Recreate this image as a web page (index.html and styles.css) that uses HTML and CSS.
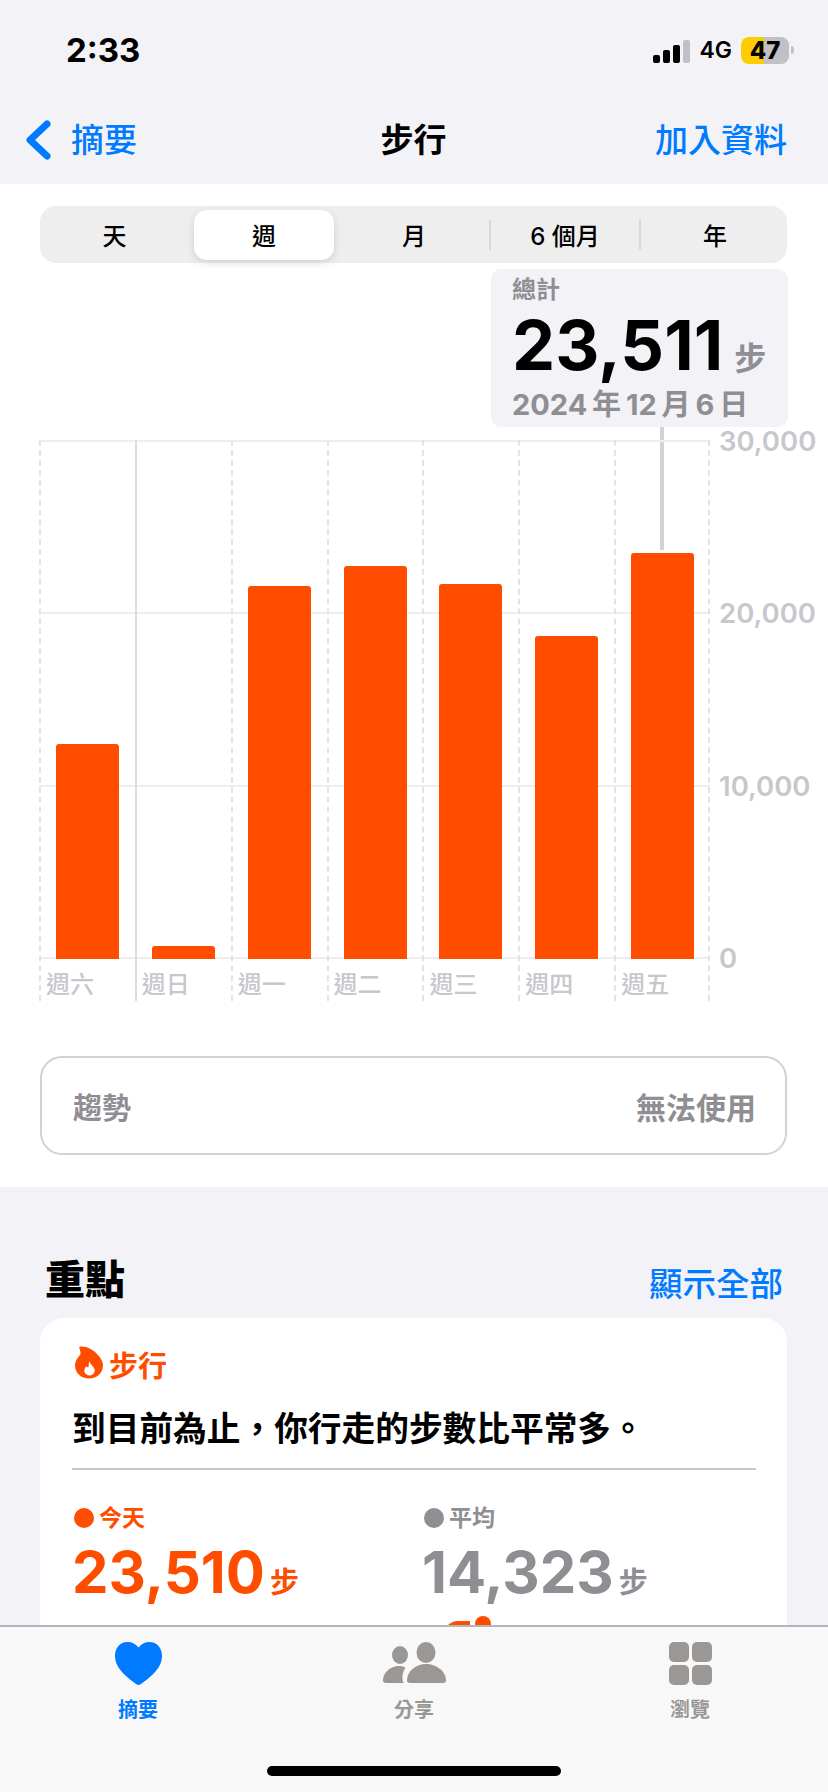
FILE: index.html
```html
<!DOCTYPE html>
<html lang="zh-Hant">
<head>
  <meta charset="UTF-8" />
  <meta name="viewport" content="width=device-width, initial-scale=1.0" />
  <title>步行</title>
  <link rel="stylesheet" href="styles.css">
</head>
<body>
  <div class="phone">
    <div class="status">
      <div class="time">2:33</div>
      <div class="status-right">
        <div class="signal">
          <span class="sig sig1"></span>
          <span class="sig sig2"></span>
          <span class="sig sig3"></span>
          <span class="sig sig4"></span>
        </div>
        <div class="net">4G</div>
        <div class="battery">47</div>
        <div class="nub"></div>
      </div>
    </div>

    <header class="nav">
      <a class="back">
        <svg class="chevron" viewBox="0 0 26 40"><path d="M22 4 L5 20 L22 36" fill="none" stroke="#007aff" stroke-width="7" stroke-linecap="round" stroke-linejoin="round"/></svg>
        <span>摘要</span>
      </a>
      <div class="title">步行</div>
      <a class="add">加入資料</a>
    </header>

    <section class="detail">
      <div class="segment">
        <div class="seg-item">天</div>
        <div class="seg-item selected">週</div>
        <div class="seg-item">月</div>
        <div class="seg-item sep">6 個月</div>
        <div class="seg-item sep">年</div>
      </div>

      <div class="summary">
        <div class="summary-label">總計</div>
        <div class="summary-value">23,511<span class="summary-unit">步</span></div>
        <div class="summary-date">2024 年 12 月 6 日</div>
      </div>

      <div class="chart">
        <div class="grid-lines">
          <div class="grid-line"><span>30,000</span></div>
          <div class="grid-line"><span>20,000</span></div>
          <div class="grid-line"><span>10,000</span></div>
          <div class="grid-line"><span>0</span></div>
        </div>
        <div class="cols">
          <div class="col"><div class="plot"><div class="bar" style="height:215px"></div></div><div class="day">週六</div></div>
          <div class="col solid"><div class="plot"><div class="bar" style="height:13px"></div></div><div class="day">週日</div></div>
          <div class="col"><div class="plot"><div class="bar" style="height:373px"></div></div><div class="day">週一</div></div>
          <div class="col"><div class="plot"><div class="bar" style="height:393px"></div></div><div class="day">週二</div></div>
          <div class="col"><div class="plot"><div class="bar" style="height:375px"></div></div><div class="day">週三</div></div>
          <div class="col"><div class="plot"><div class="bar" style="height:323px"></div></div><div class="day">週四</div></div>
          <div class="col last"><div class="plot"><div class="bar picked" style="height:406px"></div></div><div class="day">週五</div></div>
        </div>
      </div>

      <div class="trend">
        <span>趨勢</span>
        <span class="trend-state">無法使用</span>
      </div>
    </section>

    <section class="highlights">
      <div class="section-head">
        <h2>重點</h2>
        <a>顯示全部</a>
      </div>
      <div class="card">
        <div class="card-tag">
          <svg class="flame" viewBox="0 0 27 31"><path fill-rule="evenodd" fill="#ff4d00" d="M4 .5 C10 -1 17 3 21 7 C25 11 27 14.5 27 18 C27 26 21 31 13.5 31 C6 31 0 26 0 18 C0 14 2.5 11 5 8 C6 6 4.5 3 4 .5 Z M14 14 C14.5 18 19 19 19 23 C19 26 17 28 14 28 C11 28 9 26 9 23.5 C9 21.5 10 20 11 19 C11.5 20 12 20.5 13 20 C13.5 18 13 16 14 14 Z"/></svg>
          <span>步行</span>
        </div>
        <div class="card-text">到目前為止，你行走的步數比平常多。</div>
        <div class="stats">
          <div class="stat today">
            <div class="stat-label"><i></i>今天</div>
            <div class="stat-value">23,510<span>步</span></div>
          </div>
          <div class="stat avg">
            <div class="stat-label"><i></i>平均</div>
            <div class="stat-value">14,323<span>步</span></div>
          </div>
        </div>
        <svg class="peek" viewBox="0 0 44 10"><path d="M0 10 Q5 5 11 5 L23 5 L23 10 Z" fill="#ff4d00"/><circle cx="36" cy="8" r="8" fill="#ff4d00"/></svg>
      </div>
    </section>

    <nav class="tabbar">
      <div class="tab active">
        <svg class="tab-icon heart" viewBox="0 0 47 43"><path d="M23.5 43 C22 43 21 42 19 40.5 C9 33 0 25 0 14 C0 6 5 0 12.5 0 C17 0 21 2 23.5 5.5 C26 2 30 0 34.5 0 C42 0 47 6 47 14 C47 25 38 33 28 40.5 C26 42 25 43 23.5 43 Z" fill="#007aff"/></svg>
        <span>摘要</span>
      </div>
      <div class="tab">
        <svg class="tab-icon people" viewBox="0 0 63 41" fill="#9a9794">
          <ellipse cx="17" cy="13" rx="8" ry="9"/>
          <ellipse cx="43" cy="10.5" rx="9.5" ry="10.5"/>
          <path d="M3 41 C1 41 0 40 0 38.5 C0 31 7 24 16 24 C18.5 24 20.5 24.5 22.5 25.5 C20 29 19 33 19.5 38 C19.5 39 20 40 21 41 Z"/>
          <path d="M27 41 C25 41 24 40 24 38.5 C24 29 33 22 43 22 C53 22 63 29 63 38.5 C63 40 62 41 60 41 Z"/>
        </svg>
        <span>分享</span>
      </div>
      <div class="tab">
        <div class="tab-icon tiles"><i></i><i></i><i></i><i></i></div>
        <span>瀏覽</span>
      </div>
      <div class="home-bar"></div>
    </nav>
  </div>
</body>
</html>
```

FILE: styles.css
```css
* {
  box-sizing: border-box;
}

body {
  margin: 0;
  font-family: Inter, "Noto Sans CJK TC", sans-serif;
  background: #f2f2f7;
  color: #000;
}

.phone {
  position: relative;
  width: 828px;
  height: 1792px;
  overflow: hidden;
  background: #f2f2f7;
}

/* status bar */
.status {
  height: 100px;
  padding: 32px 34px 0 66px;
  display: flex;
  justify-content: space-between;
  align-items: flex-start;
}

.time {
  font-size: 33px;
  line-height: 36px;
  font-weight: 700;
}

.status-right {
  display: flex;
  align-items: center;
  height: 28px;
  margin-top: 4px;
}

.signal {
  display: flex;
  align-items: flex-end;
  gap: 3px;
  height: 24px;
  margin-top: 2px;
}

.sig {
  width: 7px;
  background: #000;
  border-radius: 2px;
}

.sig1 { height: 8px; }
.sig2 { height: 13px; }
.sig3 { height: 18px; }
.sig4 { height: 23px; background: #c0c0c6; }

.net {
  margin-left: 9px;
  font-size: 23px;
  font-weight: 600;
}

.battery {
  margin-left: 9px;
  width: 48px;
  height: 27px;
  border-radius: 8px;
  background: linear-gradient(to right, #ffcc00 23px, #c0c0c6 23px);
  font-size: 24px;
  font-weight: 800;
  line-height: 27px;
  text-align: center;
}

.nub {
  width: 3px;
  height: 8px;
  margin-left: 2px;
  background: #c0c0c6;
  border-radius: 0 3px 3px 0;
}

/* nav */
.nav {
  height: 84px;
  padding: 0 41px 0 25px;
  display: grid;
  grid-template-columns: 1fr auto 1fr;
  font-size: 33px;
  line-height: 80px;
}

.back {
  display: flex;
  align-items: center;
  gap: 20px;
  color: #007aff;
  font-weight: 500;
  height: 80px;
}

.chevron {
  width: 26px;
  height: 40px;
}

.title {
  font-weight: 700;
  font-size: 33px;
  margin-left: 15px;
}

.add {
  color: #007aff;
  font-weight: 500;
  text-align: right;
}

/* white detail section */
.detail {
  background: #fff;
  height: 1003px;
  padding: 22px 41px 0 40px;
}

.segment {
  height: 57px;
  background: #eeeeef;
  border-radius: 16px;
  display: grid;
  grid-template-columns: 149px repeat(4, 150px);
  align-items: center;
}

.seg-item {
  height: 30px;
  display: flex;
  align-items: center;
  justify-content: center;
  font-size: 24px;
  font-weight: 500;
}

.seg-item.selected {
  height: 50px;
  margin: 0 5px;
  background: #fff;
  border-radius: 13px;
  box-shadow: 0 3px 8px rgba(0, 0, 0, 0.12);
}

.seg-item.sep {
  border-left: 2px solid #d8d8da;
}

.summary {
  position: relative;
  margin: 6px 0 0 451px;
  width: 297px;
  height: 158px;
  padding: 7px 0 0 21px;
  background: #f2f2f7;
  border-radius: 10px;
}

.summary::after {
  content: "";
  position: absolute;
  left: 169px;
  top: 158px;
  width: 4px;
  height: 123px;
  background: #d1d1d6;
}

.summary-label {
  font-size: 24px;
  line-height: 28px;
  font-weight: 600;
  color: #8e8e93;
}

.summary-value {
  font-size: 68.5px;
  line-height: 57px;
  font-weight: 700;
  margin-top: 13px;
}

.summary-unit {
  font-size: 32px;
  font-weight: 600;
  color: #8e8e93;
  margin-left: 11px;
}

.summary-date {
  font-size: 29px;
  line-height: 36px;
  font-weight: 700;
  color: #8e8e93;
  word-spacing: -2px;
  white-space: nowrap;
}

/* chart */
.chart {
  position: relative;
  margin: 13px 0 0 -1px;
  width: 671px;
  height: 559px;
}

.grid-lines {
  position: absolute;
  left: 0;
  right: 0;
  top: 0;
  bottom: 40px;
  display: flex;
  flex-direction: column;
  justify-content: space-between;
}

.grid-line {
  position: relative;
  height: 2px;
  background: #eeeeee;
}

.grid-line span {
  position: absolute;
  left: 680px;
  top: -15px;
  font-size: 27.5px;
  line-height: 32px;
  font-weight: 600;
  color: #c7c7cc;
}

.cols {
  position: relative;
  display: grid;
  grid-template-columns: repeat(7, 1fr);
  height: 100%;
}

.col {
  border-left: 2px dashed #e3e3e5;
  display: flex;
  flex-direction: column;
}

.col.solid {
  border-left: 2px solid #dcdcde;
}

.col.last {
  border-right: 2px dashed #e3e3e5;
}

.plot {
  height: 519px;
  display: flex;
  align-items: flex-end;
  padding-left: 15px;
}

.bar {
  width: 63px;
  background: #ff4d00;
  border-radius: 3px 3px 0 0;
}

.day {
  padding: 10px 0 0 5px;
  font-size: 24px;
  line-height: 32px;
  font-weight: 500;
  color: #c7c7cc;
}

/* trend box */
.trend {
  margin-top: 57px;
  width: 747px;
  height: 99px;
  padding: 0 29px 0 31px;
  border: 2px solid #d1d1d6;
  border-radius: 22px;
  display: flex;
  align-items: center;
  justify-content: space-between;
  font-size: 29px;
  font-weight: 600;
  color: #8e8e93;
}

.trend-state {
  font-size: 30px;
}

/* highlights */
.highlights {
  padding: 0 41px 0 40px;
}

.section-head {
  height: 131px;
  padding: 55px 4px 0 5px;
  display: flex;
  justify-content: space-between;
  align-items: center;
}

.section-head h2 {
  margin: 0;
  font-size: 40px;
  font-weight: 800;
  line-height: 54px;
}

.section-head a {
  color: #007aff;
  font-size: 33.5px;
  font-weight: 500;
  margin-top: 2px;
}

.card {
  position: relative;
  background: #fff;
  border-radius: 24px;
  height: 420px;
  padding: 27px 31px 0 32px;
}

.card-tag {
  display: flex;
  align-items: center;
  gap: 6px;
  height: 38px;
  color: #ff4d00;
  font-size: 29px;
  font-weight: 600;
}

.flame {
  width: 28px;
  height: 33px;
  margin: -4px 0 0 3px;
}

.card-text {
  margin-top: 23px;
  height: 62px;
  font-size: 33.7px;
  line-height: 46px;
  font-weight: 700;
  white-space: nowrap;
}

.stats {
  display: flex;
  border-top: 2px solid #c6c6c8;
  padding-top: 36px;
}

.stat {
  flex: none;
  width: 350px;
  white-space: nowrap;
}

.stat-label {
  display: flex;
  align-items: center;
  gap: 5px;
  height: 24px;
  font-size: 23px;
  line-height: 24px;
  font-weight: 600;
  padding-left: 2px;
}

.stat-label i {
  width: 20px;
  height: 20px;
  border-radius: 50%;
  background: currentColor;
}

.stat-value {
  height: 68px;
  font-size: 58px;
  line-height: 68px;
  font-weight: 700;
  margin-top: 8px;
}

.stat-value span {
  font-size: 29px;
  font-weight: 600;
  margin-left: 5px;
}

.today { color: #ff4d00; }
.avg { color: #8e8e93; }

.peek {
  display: block;
  margin: 10px 0 0 375px;
  width: 44px;
  height: 10px;
}

/* tab bar */
.tabbar {
  position: absolute;
  left: 0;
  right: 0;
  bottom: 0;
  height: 167px;
  background: #f8f8f8;
  border-top: 2px solid #b4b4ba;
  display: grid;
  grid-template-columns: repeat(3, 276px);
  align-items: start;
}

.tab {
  display: flex;
  flex-direction: column;
  align-items: center;
  padding-top: 15px;
  color: #999794;
  font-size: 20px;
  font-weight: 600;
  line-height: 26px;
}

.tab.active {
  color: #007aff;
  font-weight: 700;
}

.tab-icon {
  display: block;
  height: 43px;
  margin-bottom: 12px;
}

.heart { width: 47px; }
.people { width: 63px; height: 41px; margin-bottom: 14px; }

.tiles {
  width: 43px;
  display: grid;
  grid-template-columns: 20px 20px;
  grid-template-rows: 20px 20px;
  gap: 3px;
}

.tiles i {
  background: #9a9794;
  border-radius: 5px;
}

.home-bar {
  position: absolute;
  left: 267px;
  top: 139px;
  width: 294px;
  height: 10px;
  border-radius: 5px;
  background: #000;
}
```
